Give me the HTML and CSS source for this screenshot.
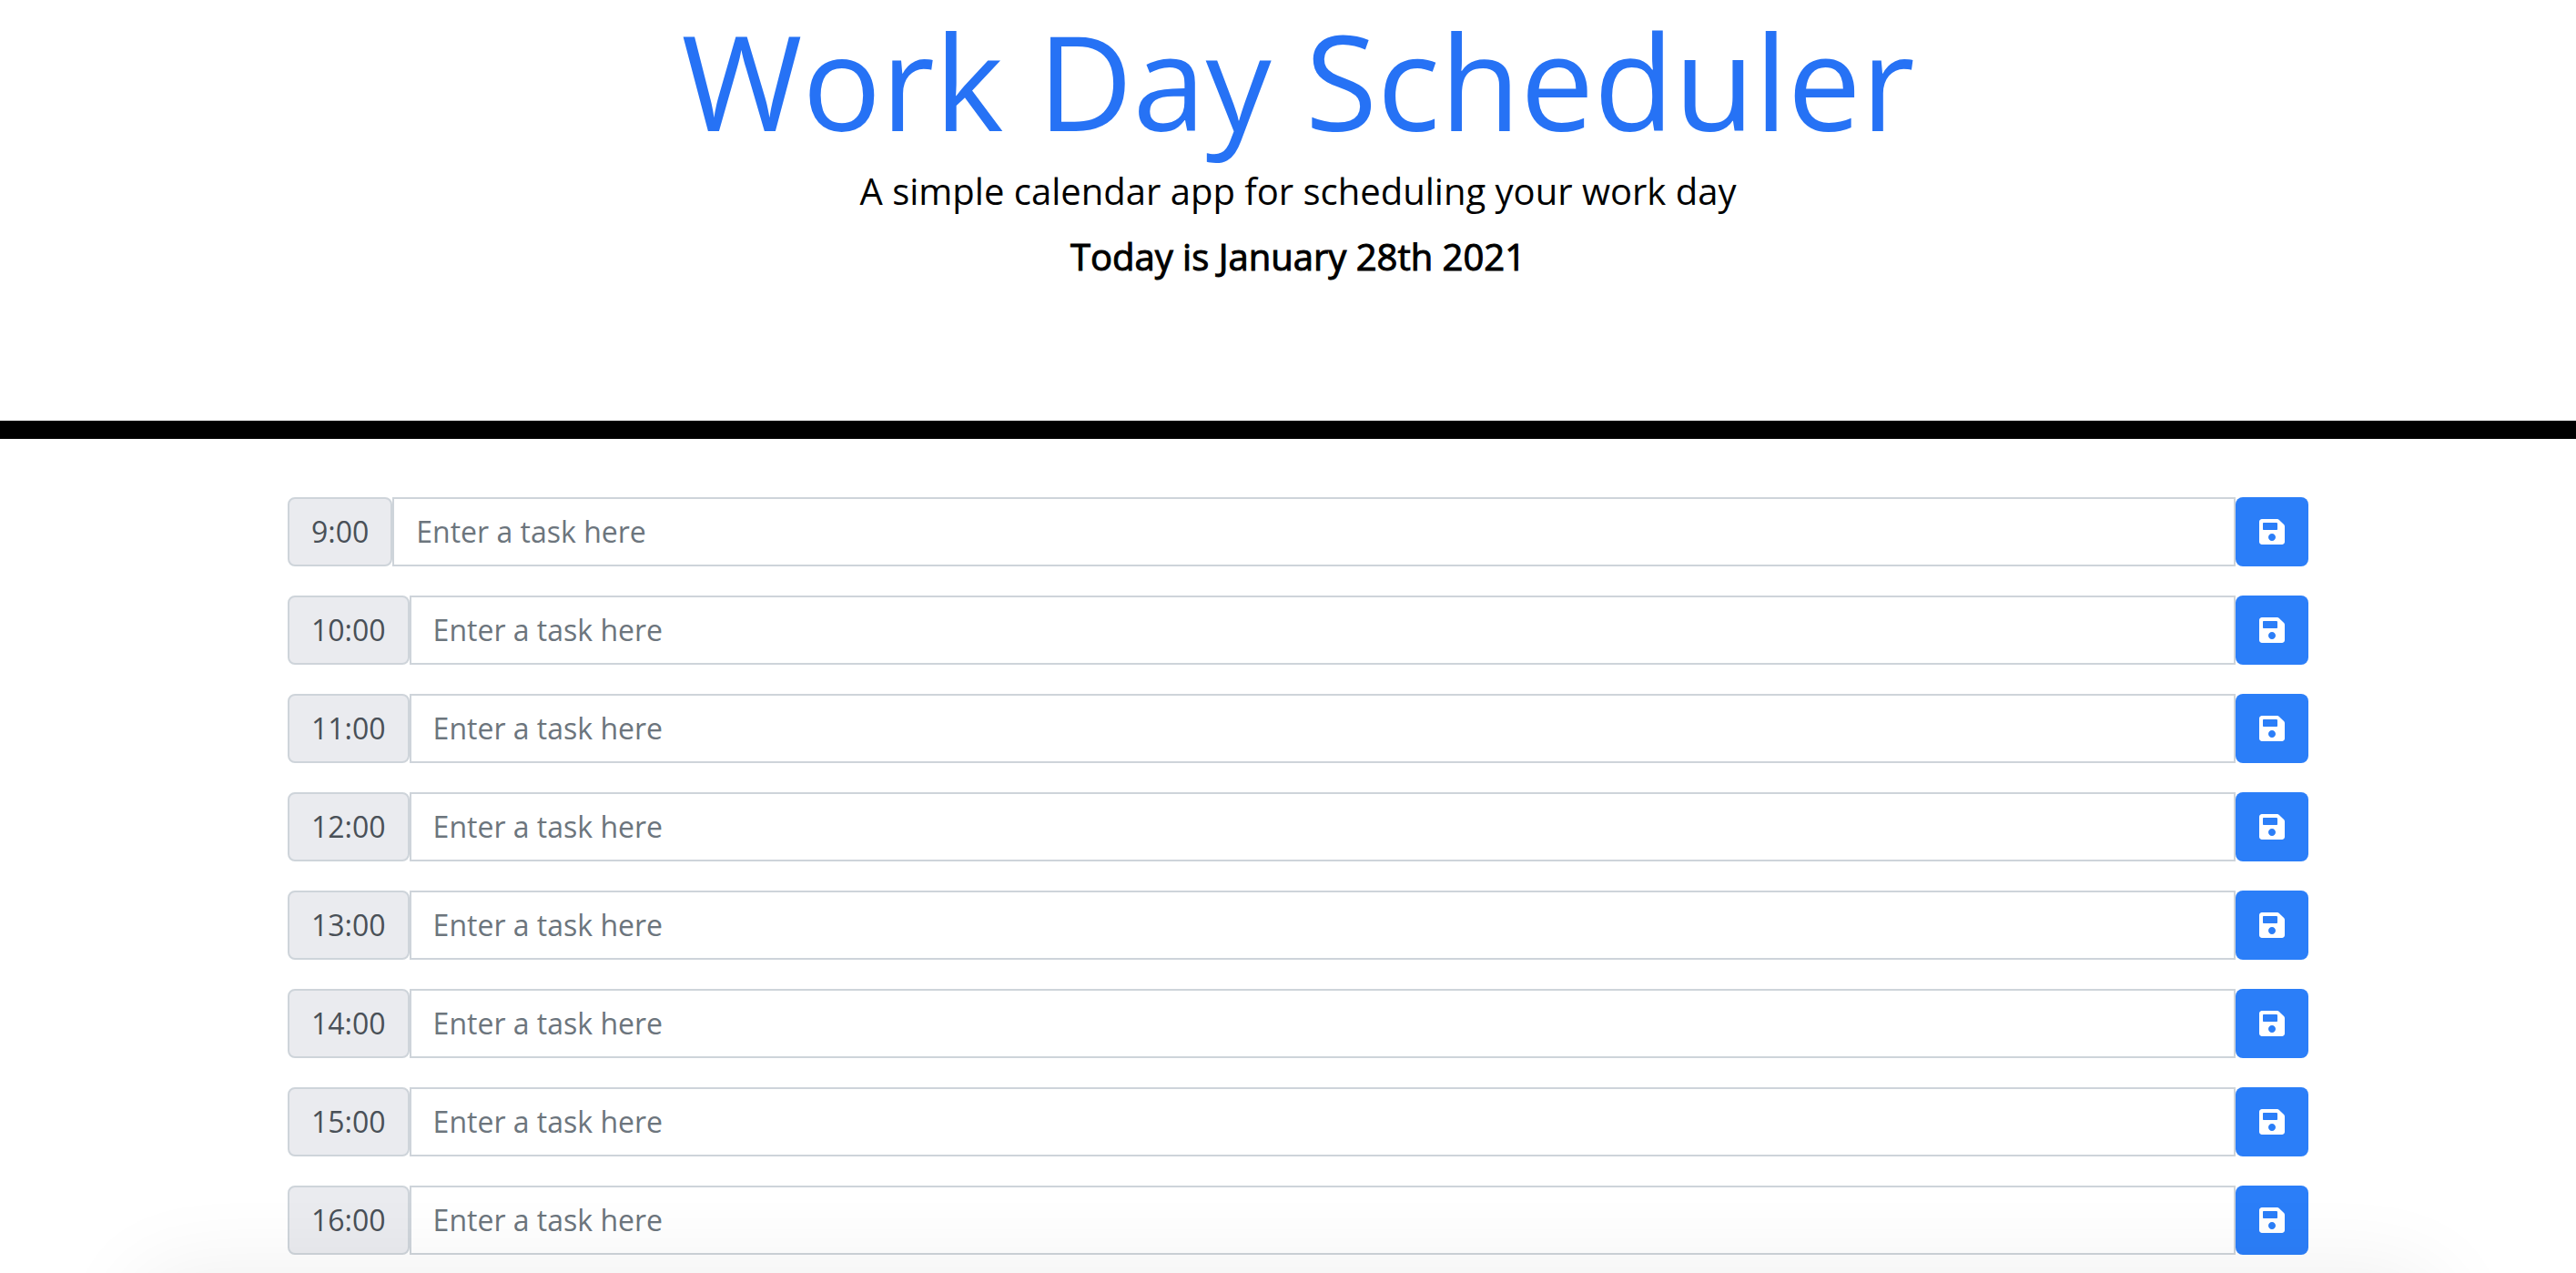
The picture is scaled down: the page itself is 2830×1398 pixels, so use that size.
FILE: index.html
```
<!DOCTYPE html>
<html lang="en">
<head>
<meta charset="utf-8">
<title>Work Day Scheduler</title>
<link rel="stylesheet" href="styles.css">
</head>
<body>
<svg class="sprite" aria-hidden="true"><symbol id="save" viewBox="0 0 448 512"><path d="M433.941 129.941l-83.882-83.882A48 48 0 0 0 316.118 32H48C21.490 32 0 53.490 0 80v352c0 26.510 21.490 48 48 48h352c26.510 0 48-21.490 48-48V163.882a48 48 0 0 0-14.059-33.941zM224 416c-35.346 0-64-28.654-64-64 0-35.346 28.654-64 64-64s64 28.654 64 64c0 35.346-28.654 64-64 64zm96-304.520V212c0 6.627-5.373 12-12 12H76c-6.627 0-12-5.373-12-12V108c0-6.627 5.373-12 12-12h228.520c3.183 0 6.235 1.264 8.485 3.515l3.480 3.480A11.996 11.996 0 0 1 320 111.480z"/></symbol></svg>
<header class="jumbotron">
<h1 class="title">Work Day Scheduler</h1>
<p class="lead">A simple calendar app for scheduling your work day</p>
<p class="today">Today is January 28th 2021</p>
</header>
<main class="schedule">
<div class="container">
<form class="row"><label class="hour" for="h9">9:00</label><input class="task" id="h9" type="text" placeholder="Enter a task here"><button class="save" type="button" aria-label="Save"><svg class="icon"><use href="#save"/></svg></button></form>
<form class="row"><label class="hour" for="h10">10:00</label><input class="task" id="h10" type="text" placeholder="Enter a task here"><button class="save" type="button" aria-label="Save"><svg class="icon"><use href="#save"/></svg></button></form>
<form class="row"><label class="hour" for="h11">11:00</label><input class="task" id="h11" type="text" placeholder="Enter a task here"><button class="save" type="button" aria-label="Save"><svg class="icon"><use href="#save"/></svg></button></form>
<form class="row"><label class="hour" for="h12">12:00</label><input class="task" id="h12" type="text" placeholder="Enter a task here"><button class="save" type="button" aria-label="Save"><svg class="icon"><use href="#save"/></svg></button></form>
<form class="row"><label class="hour" for="h13">13:00</label><input class="task" id="h13" type="text" placeholder="Enter a task here"><button class="save" type="button" aria-label="Save"><svg class="icon"><use href="#save"/></svg></button></form>
<form class="row"><label class="hour" for="h14">14:00</label><input class="task" id="h14" type="text" placeholder="Enter a task here"><button class="save" type="button" aria-label="Save"><svg class="icon"><use href="#save"/></svg></button></form>
<form class="row"><label class="hour" for="h15">15:00</label><input class="task" id="h15" type="text" placeholder="Enter a task here"><button class="save" type="button" aria-label="Save"><svg class="icon"><use href="#save"/></svg></button></form>
<form class="row"><label class="hour" for="h16">16:00</label><input class="task" id="h16" type="text" placeholder="Enter a task here"><button class="save" type="button" aria-label="Save"><svg class="icon"><use href="#save"/></svg></button></form>
</div>
</main>
</body>
</html>
```
FILE: styles.css
```
* { box-sizing: border-box; }
body {
  margin: 0;
  background: #fff;
  color: #000;
  font-family: "Open Sans", sans-serif;
  font-size: 32px;
  line-height: 48px;
}
/* soft shade along the bottom edge of the window */
body::after {
  content: "";
  position: fixed;
  left: 150px;
  right: 150px;
  bottom: -200px;
  height: 200px;
  border-radius: 40px;
  box-shadow: 0 0 100px rgba(0, 0, 0, .07);
  pointer-events: none;
}
.sprite { display: none; }
.jumbotron {
  padding: 0 32px 150px 54px;
  border-bottom: 20px solid #000;
  text-align: center;
  font-size: 40px;
  line-height: 60px;
}
.title {
  margin: 0;
  color: #2672f5;
  font-size: 144px;
  font-weight: 400;
  line-height: 176px;
}
.lead { margin: 4px 0 12px; }
.today {
  margin: 0;
  -webkit-text-stroke: 1px currentColor;
}
.schedule { padding: 64px 32px 20px 54px; }
.container {
  display: flex;
  flex-direction: column;
  gap: 32px;
  max-width: 2220px;
  margin: 0 auto;
}
.row { display: flex; margin: 0; }
.hour, .task { border: 2px solid #ced4da; }
.hour {
  display: flex;
  align-items: center;
  padding: 12px 24px;
  background: #eaebef;
  color: #495057;
  border-radius: 8px;
}
.task {
  flex: 1;
  min-width: 0;
  padding: 12px 24px;
  background: #fff;
  color: #495057;
  font: inherit;
  border-radius: 0;
}
.task::placeholder { color: #6c757d; opacity: 1; }
.save {
  display: flex;
  align-items: center;
  justify-content: center;
  width: 80px;
  padding: 0;
  border: 0;
  border-radius: 8px;
  background: #2b7ef8;
  color: #fff;
}
.icon { width: 28px; height: 32px; fill: currentColor; }
```
